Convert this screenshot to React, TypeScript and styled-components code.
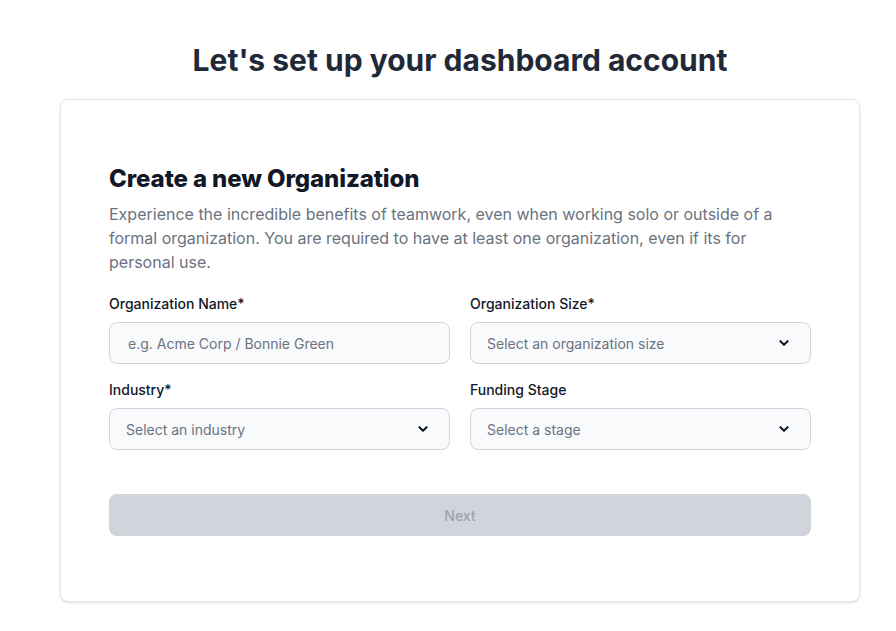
import React from "react";
import styled, { createGlobalStyle } from "styled-components";

const Global = createGlobalStyle`
  * { box-sizing: border-box; }
  html, body { margin: 0; padding: 0; background: #ffffff; }
  body { font-family: Inter, "Noto Sans", sans-serif; -webkit-font-smoothing: antialiased; }
`;

const Page = styled.div`
  display: flex;
  flex-direction: column;
  align-items: center;
  padding: 42px 36px 28px 60px;
`;

const Title = styled.h1`
  margin: 0 0 21px;
  font-size: 30px;
  line-height: 36px;
  font-weight: 700;
  color: #1f2937;
  text-align: center;
`;

const Card = styled.div`
  width: 800px;
  background: #ffffff;
  border: 1px solid #e5e7eb;
  border-radius: 8px;
  box-shadow: 0 1px 3px rgba(0, 0, 0, 0.1), 0 1px 2px -1px rgba(0, 0, 0, 0.1);
  padding: 63px 48px 65px;
`;

const Heading = styled.h2`
  margin: 0 0 7px;
  font-size: 24px;
  line-height: 32px;
  font-weight: 800;
  letter-spacing: -0.1px;
  color: #111827;
`;

const Description = styled.p`
  margin: 0 0 20px;
  font-size: 16px;
  line-height: 24px;
  color: #6b7280;
`;

const Grid = styled.div`
  display: grid;
  grid-template-columns: 1fr 1fr;
  column-gap: 20px;
  row-gap: 16px;
`;

const Field = styled.div`
  display: flex;
  flex-direction: column;
`;

const Label = styled.label`
  font-size: 14px;
  line-height: 20px;
  font-weight: 500;
  color: #111827;
  margin-bottom: 8px;
`;

const Input = styled.input`
  height: 42px;
  width: 100%;
  border: 1px solid #d1d5db;
  border-radius: 8px;
  background: #f9fafb;
  padding: 0 18px;
  font-family: inherit;
  font-size: 14px;
  color: #111827;
  outline: none;
  &::placeholder { color: #6b7280; }
`;

const SelectBox = styled.div`
  height: 42px;
  width: 100%;
  border: 1px solid #d1d5db;
  border-radius: 8px;
  background: #f9fafb;
  padding: 0 20px 0 16px;
  display: flex;
  align-items: center;
  justify-content: space-between;
  font-size: 14px;
  color: #6b7280;
`;

const Chevron = () => (
  <svg width="12" height="12" viewBox="0 0 20 20" fill="none">
    <path d="M4 7l6 6 6-6" stroke="#111827" strokeWidth="3.4" strokeLinecap="round" strokeLinejoin="round" />
  </svg>
);

const Button = styled.button`
  margin-top: 44px;
  width: 100%;
  height: 42px;
  border: none;
  border-radius: 8px;
  background: #d1d5db;
  color: #9ca3af;
  font-family: inherit;
  font-size: 14px;
  font-weight: 500;
`;

const Select = ({ text }: { text: string }) => (
  <SelectBox>
    <span>{text}</span>
    <Chevron />
  </SelectBox>
);

export default function App() {
  return (
    <>
      <Global />
      <Page>
        <Title>Let's set up your dashboard account</Title>
        <Card>
          <Heading>Create a new Organization</Heading>
          <Description>
            Experience the incredible benefits of teamwork, even when working solo or outside of a
            formal organization. You are required to have at least one organization, even if its for
            personal use.
          </Description>
          <Grid>
            <Field>
              <Label>Organization Name*</Label>
              <Input placeholder="e.g. Acme Corp / Bonnie Green" />
            </Field>
            <Field>
              <Label>Organization Size*</Label>
              <Select text="Select an organization size" />
            </Field>
            <Field>
              <Label>Industry*</Label>
              <Select text="Select an industry" />
            </Field>
            <Field>
              <Label>Funding Stage</Label>
              <Select text="Select a stage" />
            </Field>
          </Grid>
          <Button disabled>Next</Button>
        </Card>
      </Page>
    </>
  );
}
